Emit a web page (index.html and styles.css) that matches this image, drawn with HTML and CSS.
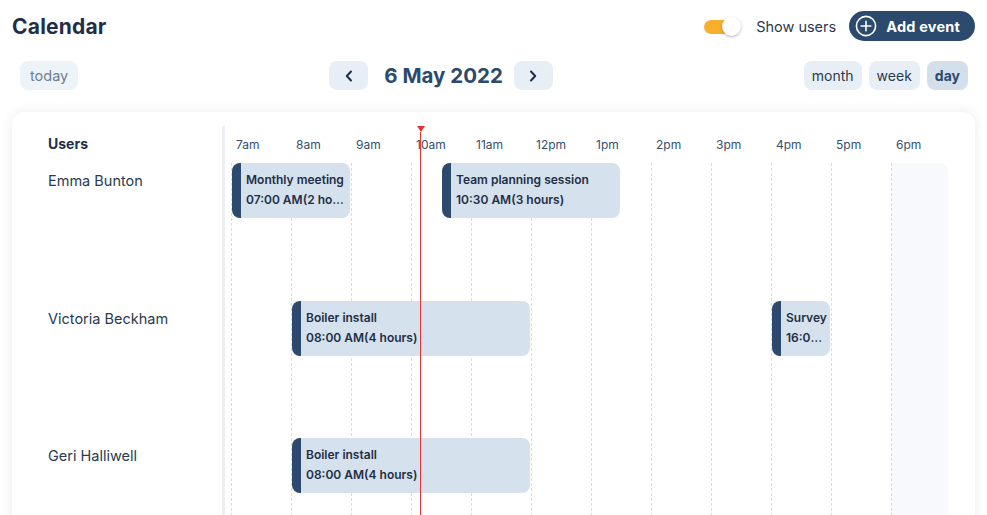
FILE: index.html
```html
<!DOCTYPE html>
<html>
<head>
<meta charset="utf-8">
<title>Calendar</title>
<link rel="stylesheet" href="styles.css">
</head>
<body>
<header class="topbar">
  <h1 class="title">Calendar</h1>
  <div class="top-actions">
    <span class="switch"><span class="track"></span><span class="knob"></span></span>
    <span class="switch-label">Show users</span>
    <button class="add-btn">
      <svg class="plus" width="22" height="22" viewBox="0 0 22 22"><circle cx="11" cy="11" r="9.6" fill="none" stroke="#fff" stroke-width="1.6"/><path d="M11 6.2v9.6M6.2 11h9.6" stroke="#fff" stroke-width="1.6" stroke-linecap="round"/></svg>
      <span>Add event</span>
    </button>
  </div>
</header>

<div class="toolbar">
  <button class="chip chip-today">today</button>
  <div class="date-nav">
    <button class="nav-btn"><svg width="12" height="14" viewBox="0 0 12 14"><path d="M8 2.5L3.8 7L8 11.5" fill="none" stroke="#1f3048" stroke-width="2" stroke-linecap="round" stroke-linejoin="round"/></svg></button>
    <span class="date">6 May 2022</span>
    <button class="nav-btn"><svg width="12" height="14" viewBox="0 0 12 14"><path d="M4 2.5L8.2 7L4 11.5" fill="none" stroke="#1f3048" stroke-width="2" stroke-linecap="round" stroke-linejoin="round"/></svg></button>
  </div>
  <div class="views">
    <button class="chip view">month</button>
    <button class="chip view">week</button>
    <button class="chip view active">day</button>
  </div>
</div>

<section class="card">
  <div class="users-col">
    <div class="users-head">Users</div>
    <div class="user-row">Emma Bunton</div>
    <div class="user-row">Victoria Beckham</div>
    <div class="user-row">Geri Halliwell</div>
  </div>
  <div class="timeline">
    <div class="hours">
      <span>7am</span><span>8am</span><span>9am</span><span>10am</span><span>11am</span><span>12pm</span><span>1pm</span><span>2pm</span><span>3pm</span><span>4pm</span><span>5pm</span><span>6pm</span>
    </div>
    <div class="grid">
      <div class="cols">
        <div class="col"></div><div class="col"></div><div class="col"></div><div class="col"></div>
        <div class="col"></div><div class="col"></div><div class="col"></div><div class="col"></div>
        <div class="col"></div><div class="col"></div><div class="col"></div><div class="col last"></div>
      </div>

      <div class="event" style="grid-area: 1 / 1 / 2 / 5;">
        <div class="ev-line">Monthly meeting</div>
        <div class="ev-line">07:00 AM(2 hours)</div>
      </div>
      <div class="event" style="grid-area: 1 / 8 / 2 / 14;">
        <div class="ev-line">Team planning session</div>
        <div class="ev-line">10:30 AM(3 hours)</div>
      </div>
      <div class="event" style="grid-area: 2 / 3 / 3 / 11;">
        <div class="ev-line">Boiler install</div>
        <div class="ev-line">08:00 AM(4 hours)</div>
      </div>
      <div class="event" style="grid-area: 2 / 19 / 3 / 21;">
        <div class="ev-line">Survey</div>
        <div class="ev-line">16:00 PM(1 hour)</div>
      </div>
      <div class="event" style="grid-area: 3 / 3 / 4 / 11;">
        <div class="ev-line">Boiler install</div>
        <div class="ev-line">08:00 AM(4 hours)</div>
      </div>
    </div>
    <div class="now" style="left: 195px;"><span class="now-head"></span><span class="now-line"></span></div>
  </div>
</section>
</body>
</html>
```

FILE: styles.css
```css
html, body {
  margin: 0;
  padding: 0;
  overflow: hidden;
  background: #ffffff;
}
body {
  font-family: Inter, "Open Sans", "Liberation Sans", sans-serif;
  color: #1f2f47;
  height: 515px;
}
button {
  font-family: inherit;
  border: 0;
  cursor: pointer;
}

/* top bar */
.topbar {
  display: flex;
  align-items: center;
  justify-content: space-between;
  height: 30px;
  padding: 11px 12px 0 12px;
}
.title {
  margin: 0;
  font-size: 21px;
  font-weight: 700;
  color: #1f2f47;
  letter-spacing: 0.2px;
}
.top-actions {
  display: flex;
  align-items: center;
}
.switch {
  position: relative;
  display: block;
  width: 37px;
  height: 19px;
}
.track {
  position: absolute;
  left: 0;
  top: 3px;
  width: 36px;
  height: 14px;
  border-radius: 7px;
  background: #f9ae2c;
}
.knob {
  position: absolute;
  right: 0;
  top: 0;
  width: 19px;
  height: 19px;
  border-radius: 50%;
  background: #ffffff;
  box-shadow: 0 1px 3px rgba(0, 0, 0, 0.3);
}
.switch-label {
  margin-left: 15px;
  font-size: 14.5px;
  color: #2a3a50;
}
.add-btn {
  margin-left: 13px;
  display: flex;
  align-items: center;
  gap: 9px;
  height: 30px;
  padding: 0 15px 0 6px;
  border-radius: 15px;
  background: #2c4a6e;
  color: #ffffff;
  font-size: 14.5px;
  font-weight: 700;
  letter-spacing: 0.2px;
}
.plus {
  display: block;
}

/* toolbar */
.toolbar {
  display: flex;
  align-items: center;
  justify-content: space-between;
  margin-top: 20px;
  padding: 0 19px 0 20px;
  height: 29px;
}
.chip {
  height: 29px;
  padding: 0 8px;
  border-radius: 8px;
  font-size: 14px;
  background: #e8eef6;
  color: #2a3a50;
}
.chip-today {
  background: #eef3f7;
  color: #6d7d90;
  padding: 0 10px;
  font-size: 14.5px;
}
.date-nav {
  display: flex;
  align-items: center;
}
.nav-btn {
  width: 39px;
  height: 29px;
  border-radius: 8px;
  background: #e8eef6;
  display: flex;
  align-items: center;
  justify-content: center;
  padding: 0;
}
.date {
  margin: 0 11px 0 16px;
  font-size: 20.5px;
  font-weight: 700;
  color: #2c4a6b;
}
.views {
  display: flex;
  gap: 7px;
}
.view.active {
  background: #d3e0ec;
  color: #2c4a6e;
  font-weight: 700;
}

/* card */
.card {
  display: flex;
  margin: 22px 12px 0 12px;
  padding-top: 14px;
  height: 560px;
  background: #ffffff;
  border-radius: 12px;
  box-shadow: 0 0 12px rgba(30, 50, 80, 0.10);
}
.users-col {
  width: 174px;
  padding-left: 36px;
  border-right: 3px solid #eceff3;
  flex-shrink: 0;
}
.users-head {
  height: 37px;
  line-height: 36px;
  font-size: 14px;
  font-weight: 700;
  color: #1f2f47;
}
.user-row {
  height: 137.5px;
  box-sizing: border-box;
  padding-top: 7px;
  line-height: 21px;
  font-size: 14.5px;
  color: #2a3a50;
}

.timeline {
  position: relative;
  flex: 1;
  padding-left: 6px;
}
.hours {
  display: flex;
  height: 37px;
  align-items: center;
}
.hours span {
  width: 60px;
  box-sizing: border-box;
  padding-left: 5px;
  font-size: 12px;
  color: #34506f;
}
.grid {
  display: grid;
  grid-template-columns: repeat(24, 30px);
  grid-template-rows: repeat(3, 137.5px) 60px;
}
.cols {
  grid-row: 1 / -1;
  grid-column: 1 / -1;
  display: flex;
}
.col {
  width: 60px;
  box-sizing: border-box;
  border-left: 1px dashed #d5dbe7;
}
.col.last {
  width: 57px;
  background: #f8f9fd;
  border-top-right-radius: 8px;
}
.event {
  align-self: start;
  height: 55px;
  margin: 0 1px;
  box-sizing: border-box;
  min-width: 0;
  overflow: hidden;
  padding: 7px 1px 0 5px;
  background: #d5e1ec;
  border-left: 9px solid #2c4a6e;
  border-radius: 8px;
}
.ev-line {
  white-space: nowrap;
  overflow: hidden;
  text-overflow: ellipsis;
  line-height: 20px;
  font-size: 12px;
  font-weight: 600;
  color: #1f2f47;
}

.now {
  position: absolute;
  top: 0;
  bottom: 0;
  width: 9px;
  margin-left: -4px;
  display: flex;
  flex-direction: column;
  align-items: center;
}
.now-head {
  width: 0;
  height: 0;
  border-left: 4.5px solid transparent;
  border-right: 4.5px solid transparent;
  border-top: 6px solid #e3342f;
}
.now-line {
  flex: 1;
  width: 1px;
  background: #e3342f;
}
```
